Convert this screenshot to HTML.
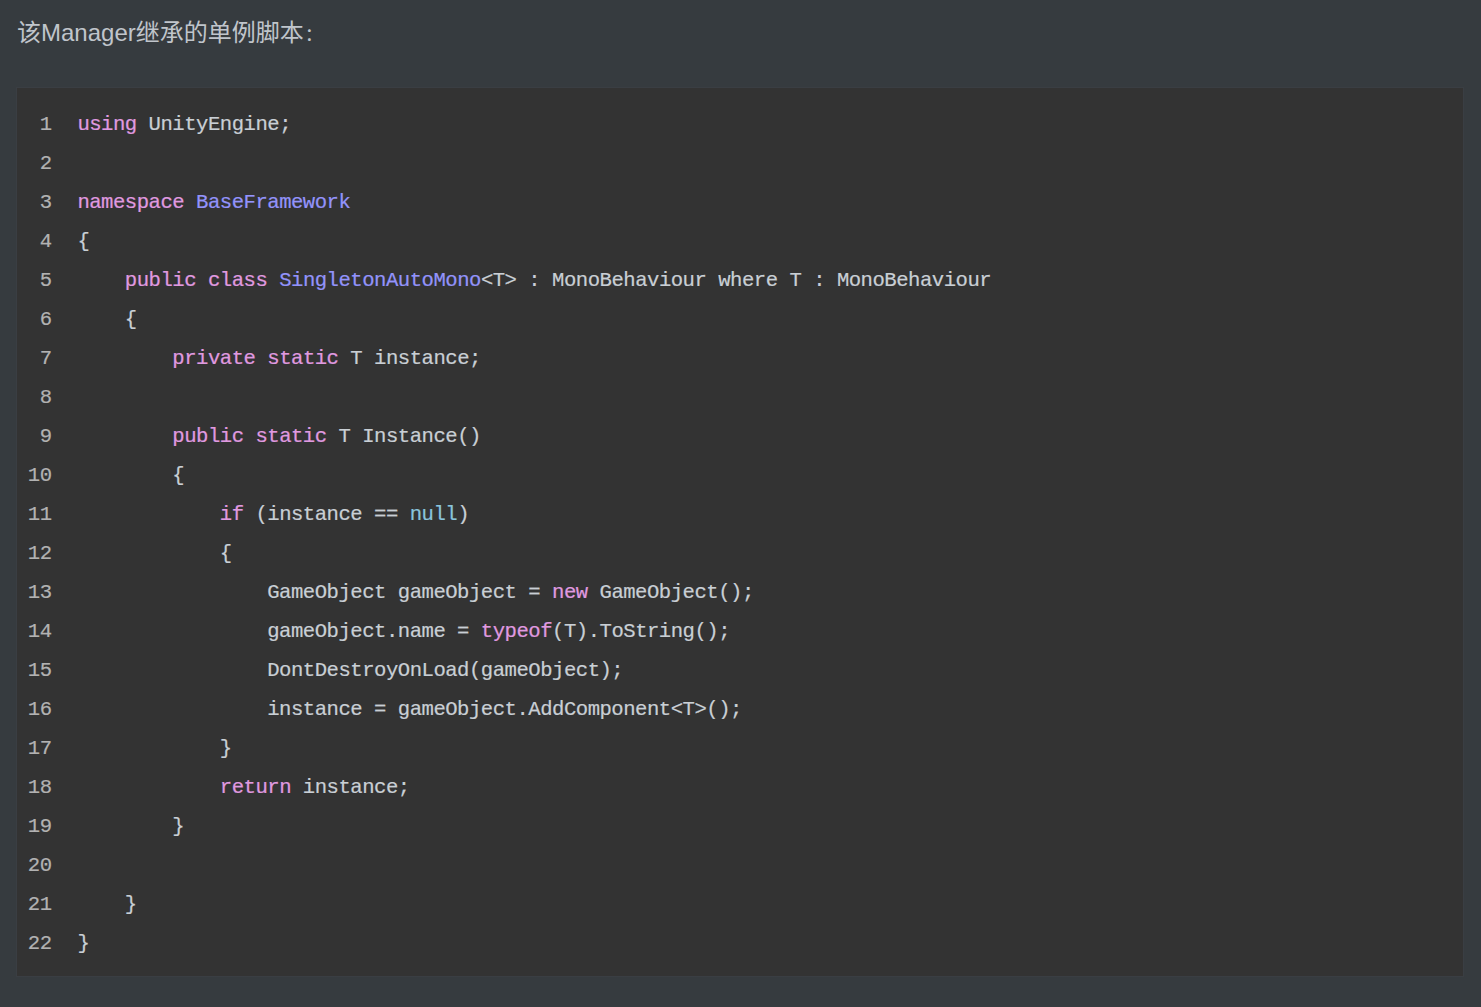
<!DOCTYPE html>
<html lang="zh-CN">
<head>
<meta charset="utf-8">
<title>SingletonAutoMono</title>
<style>
html,body{margin:0;padding:0;}
body{width:1481px;height:1007px;overflow:hidden;background:#363b3f;position:relative;
  font-family:"Liberation Sans","Noto Sans CJK SC",sans-serif;}
.title{position:absolute;left:17px;top:15.2px;font-size:24px;line-height:36px;color:#c0c5cb;white-space:nowrap;letter-spacing:0;}
.colon{font-size:18.5px;margin-left:1.1px;position:relative;top:-0.5px;}
.code{position:absolute;left:17px;top:88px;width:1446px;height:888px;background:#333333;box-sizing:border-box;box-shadow:0 0 0 1px #3a3e43;}
pre{margin:0;position:absolute;left:0;top:16.8px;font-family:"Liberation Mono",monospace;font-size:20.6px;letter-spacing:-0.492px;line-height:39px;color:#c9cfd5;white-space:pre;-webkit-text-stroke:0.2px;}
.ln{display:inline-block;width:34.5px;text-align:right;color:#b2b2b2;margin-right:25.9px;}
.k{color:#e09ae0;}
.c{color:#9393fb;}
.n{color:#8ac4dc;}
</style>
</head>
<body>
<div class="title">该Manager继承的单例脚本<span class="colon">：</span></div>
<div class="code"><pre>
<span class="ln">1</span><span class="k">using</span> UnityEngine;
<span class="ln">2</span>
<span class="ln">3</span><span class="k">namespace</span> <span class="c">BaseFramework</span>
<span class="ln">4</span>{
<span class="ln">5</span>    <span class="k">public</span> <span class="k">class</span> <span class="c">SingletonAutoMono</span>&lt;T&gt; : MonoBehaviour where T : MonoBehaviour
<span class="ln">6</span>    {
<span class="ln">7</span>        <span class="k">private</span> <span class="k">static</span> T instance;
<span class="ln">8</span>
<span class="ln">9</span>        <span class="k">public</span> <span class="k">static</span> T Instance()
<span class="ln">10</span>        {
<span class="ln">11</span>            <span class="k">if</span> (instance == <span class="n">null</span>)
<span class="ln">12</span>            {
<span class="ln">13</span>                GameObject gameObject = <span class="k">new</span> GameObject();
<span class="ln">14</span>                gameObject.name = <span class="k">typeof</span>(T).ToString();
<span class="ln">15</span>                DontDestroyOnLoad(gameObject);
<span class="ln">16</span>                instance = gameObject.AddComponent&lt;T&gt;();
<span class="ln">17</span>            }
<span class="ln">18</span>            <span class="k">return</span> instance;
<span class="ln">19</span>        }
<span class="ln">20</span>
<span class="ln">21</span>    }
<span class="ln">22</span>}
</pre></div>
</body>
</html>
